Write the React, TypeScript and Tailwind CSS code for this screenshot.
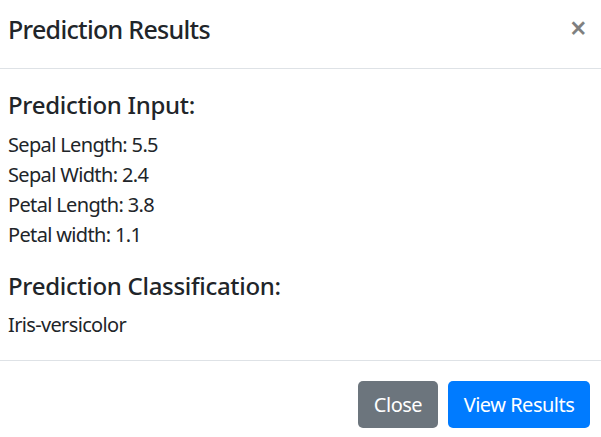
export default function App() {
  const inputs = [
    "Sepal Length: 5.5",
    "Sepal Width: 2.4",
    "Petal Length: 3.8",
    "Petal width: 1.1",
  ];

  return (
    <div className="w-[601px] h-[437px] bg-white text-[#212529] font-['Noto_Sans',sans-serif] overflow-hidden">
      {/* header */}
      <div className="h-[69px] border-b border-[#dee2e6] flex justify-between pl-[8px] pr-[14px] pt-[14px]">
        <h5 className="text-[25px] leading-[30px] font-medium tracking-[-0.7px]">Prediction Results</h5>
        <button className="text-[30px] leading-[30px] font-semibold text-black/50 h-[30px] -mt-[1px]">×</button>
      </div>

      {/* body */}
      <div className="px-[8px] pt-[21px] pb-[20px]">
        <h4 className="text-[24px] leading-[29px] font-medium tracking-[-0.3px] mb-[11px]">Prediction Input:</h4>
        <div className="text-[20px] leading-[30px] tracking-[-0.65px] mb-[21px]">
          {inputs.map((line) => (
            <div key={line}>{line}</div>
          ))}
        </div>
        <h4 className="text-[24px] leading-[29px] font-medium tracking-[-0.3px] mb-[10px]">Prediction Classification:</h4>
        <div className="text-[20px] leading-[30px] tracking-[-0.65px]">Iris-versicolor</div>
      </div>

      {/* footer */}
      <div className="border-t border-[#dee2e6] flex justify-end gap-[10px] pt-[20px] pr-[11px]">
        <button className="w-[80px] h-[47px] rounded-[5px] bg-[#6c757d] text-white text-[20px] tracking-[-0.5px]">Close</button>
        <button className="w-[142px] h-[47px] rounded-[5px] bg-[#007bff] text-white text-[20px] tracking-[-0.5px]">View Results</button>
      </div>
    </div>
  );
}
